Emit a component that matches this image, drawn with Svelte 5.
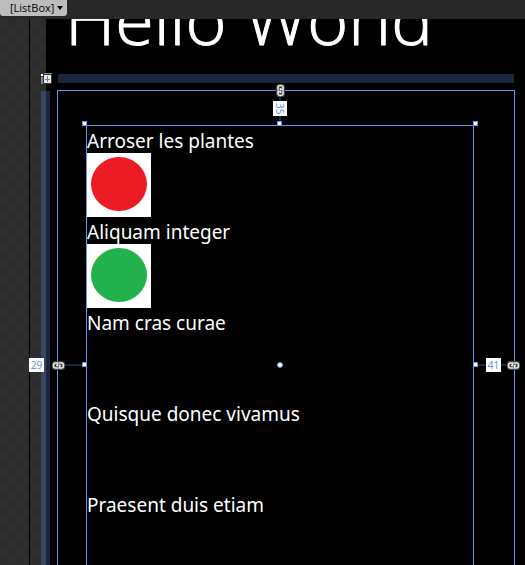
<script>
  const items = [
    { title: 'Arroser les plantes', color: '#ed1c24' },
    { title: 'Aliquam integer', color: '#22b14c' },
    { title: 'Nam cras curae', color: null },
    { title: 'Quisque donec vivamus', color: null },
    { title: 'Praesent duis etiam', color: null }
  ];
  const handles = ['top-left', 'top', 'top-right', 'left', 'right', 'center'];
  const links = ['north', 'west', 'east'];
</script>

<div class="designer">
  <header class="breadcrumb">
    <button type="button" class="crumb">
      <span>[ListBox]</span>
      <svg width="6" height="4" viewBox="0 0 6 4" aria-hidden="true"><path d="M0 0h6L3 4z" fill="#000" /></svg>
    </button>
  </header>

  <div class="stage">
    <div class="gutter"></div>

    <main class="phone">
      <h1>Hello World</h1>
      <div class="column-rail"></div>
      <div class="row-rail"></div>
      <svg class="grid-mode" width="11" height="11" viewBox="0 0 11 11" shape-rendering="crispEdges" aria-hidden="true">
        <path d="M3 0h8v1H3zM0 4h2v7H0z" fill="#868686" />
        <path d="M0 1h2v2H0z" fill="#fff" />
        <path d="M2 1h9v10H2z" fill="#333" />
        <path d="M3 2h7v8H3z" fill="#e8e8e8" />
        <path d="M6 3h1v6H6zM4 6h5v1H4z" fill="#6482b4" />
      </svg>

      <section class="grid">
        {#each links as side}
          <svg class="link {side}" width="13" height="9" viewBox="0 0 13 9" aria-hidden="true">
            <rect x="0" y="0" width="13" height="9" rx="3" fill="#444" />
            <path d="M6.5 7H3.5Q1.5 7 1.5 4.5 1.5 2 3.5 2H5.5V4.5H4" fill="none" stroke="#e6e6e6" stroke-width="1.6" />
            <path d="M6.5 2H9.5Q11.5 2 11.5 4.5 11.5 7 9.5 7H7.5V4.5H9" fill="none" stroke="#e6e6e6" stroke-width="1.6" />
          </svg>
        {/each}

        <div class="listbox">
          <ul>
            {#each items as item}
              <li>
                <span class="title">{item.title}</span>
                {#if item.color}
                  <svg class="status" width="64" height="64" viewBox="0 0 64 64" aria-hidden="true">
                    <rect width="64" height="64" fill="#fff" />
                    <ellipse cx="32" cy="31" rx="28" ry="27" fill={item.color} />
                  </svg>
                {/if}
              </li>
            {/each}
          </ul>

          <i class="tie tie-north"></i>
          <i class="tie tie-west"></i>
          <i class="tie tie-east"></i>
          {#each handles as spot}
            <i class="handle {spot}"></i>
          {/each}
          <span class="margin margin-north">35</span>
          <span class="margin margin-west">29</span>
          <span class="margin margin-east">41</span>
        </div>
      </section>
    </main>
  </div>
</div>

<style>
  :global(body) {
    margin: 0;
    background: #000;
  }

  .designer {
    display: flex;
    flex-direction: column;
    height: 100vh;
    overflow: hidden;
    background: #000;
    color: #fff;
    font-family: "Noto Sans", "Open Sans", sans-serif;
  }

  .breadcrumb {
    flex: none;
    height: 19px;
    background: #282828;
  }

  .crumb {
    display: flex;
    align-items: center;
    gap: 3px;
    height: 16px;
    padding: 0 4px 0 10px;
    border: 0;
    border-radius: 0 0 3px 3px;
    background: #bdbdbd;
    color: #000;
    font: 11px/16px "Open Sans", "Noto Sans", sans-serif;
  }

  .stage {
    display: flex;
    flex: 1;
    min-height: 0;
  }

  .gutter {
    flex: none;
    width: 46px;
    background:
      linear-gradient(#000, #000) 29px 0 / 1px 100% no-repeat,
      repeating-conic-gradient(#2c2c2c 0 25%, #2f2f2f 0 50%) 0 0 / 16px 16px;
  }

  .phone {
    position: relative;
    display: flex;
    flex: 1;
    flex-direction: column;
    min-width: 0;
    background: #000;
  }

  h1 {
    display: flex;
    flex: none;
    align-items: flex-end;
    box-sizing: border-box;
    height: 55px;
    margin: 0;
    padding: 0 0 8px 19px;
    overflow: hidden;
    font: 300 70px/96px "Open Sans", "Noto Sans", sans-serif;
    -webkit-text-stroke: 1px #fff;
    white-space: nowrap;
  }

  .column-rail {
    flex: none;
    height: 9px;
    margin: 0 11px 7px 12px;
    background: #1a253f;
  }

  .row-rail {
    position: absolute;
    top: 72px;
    bottom: 0;
    left: -5px;
    width: 9px;
    background: linear-gradient(90deg, #39465f 5px, #1a253f 5px);
  }

  .grid-mode {
    position: absolute;
    top: 54px;
    left: -5px;
  }

  .grid {
    position: relative;
    display: flex;
    flex: 1;
    min-height: 0;
    margin: 0 10px 0 11px;
    padding: 34px 40px 0 28px;
    border: 1px solid #6495ed;
    border-bottom: 0;
  }

  .listbox {
    position: relative;
    flex: 1;
    height: 480px;
    border: 1px solid #6495ed;
    box-sizing: border-box;
  }

  ul {
    margin: 0;
    padding: 0;
    list-style: none;
  }

  li {
    display: flex;
    flex-direction: column;
    height: 91px;
  }

  .title {
    height: 27px;
    font-size: 19px;
    line-height: 30px;
    white-space: nowrap;
  }

  .status {
    display: block;
  }

  .handle {
    position: absolute;
    box-sizing: border-box;
    width: 5px;
    height: 5px;
    border: 1px solid #6495ed;
    background: #fff;
  }

  .top-left,
  .top,
  .top-right {
    top: -5px;
  }

  .left,
  .right,
  .center {
    top: 236px;
  }

  .top-left,
  .left {
    left: -5px;
  }

  .top-right,
  .right {
    right: -5px;
  }

  .top,
  .center {
    left: calc(50% - 3px);
  }

  .center {
    width: 6px;
    height: 6px;
    border-radius: 50%;
  }

  .margin {
    position: absolute;
    width: 15px;
    height: 14px;
    background: #fff;
    color: #6495ed;
    font: 10px/14px "Noto Sans", sans-serif;
    text-align: center;
  }

  .margin-north {
    top: -25px;
    left: calc(50% - 7px);
    width: 14px;
    height: 15px;
    writing-mode: vertical-rl;
  }

  .margin-west {
    top: 232px;
    left: -58px;
  }

  .margin-east {
    top: 232px;
    right: -28px;
  }

  .tie {
    position: absolute;
    background: #1a253f;
  }

  .tie-north {
    top: -35px;
    left: calc(50% - 1px);
    width: 2px;
    height: 30px;
  }

  .tie-west,
  .tie-east {
    top: 238px;
    height: 2px;
  }

  .tie-west {
    left: -29px;
    width: 24px;
  }

  .tie-east {
    right: -40px;
    width: 36px;
  }

  .link {
    position: absolute;
    z-index: 1;
  }

  .north {
    top: -5px;
    left: calc(50% - 12px);
    transform: rotate(90deg);
  }

  .west {
    top: 270px;
    left: -6px;
  }

  .east {
    top: 270px;
    right: -6px;
  }
</style>
